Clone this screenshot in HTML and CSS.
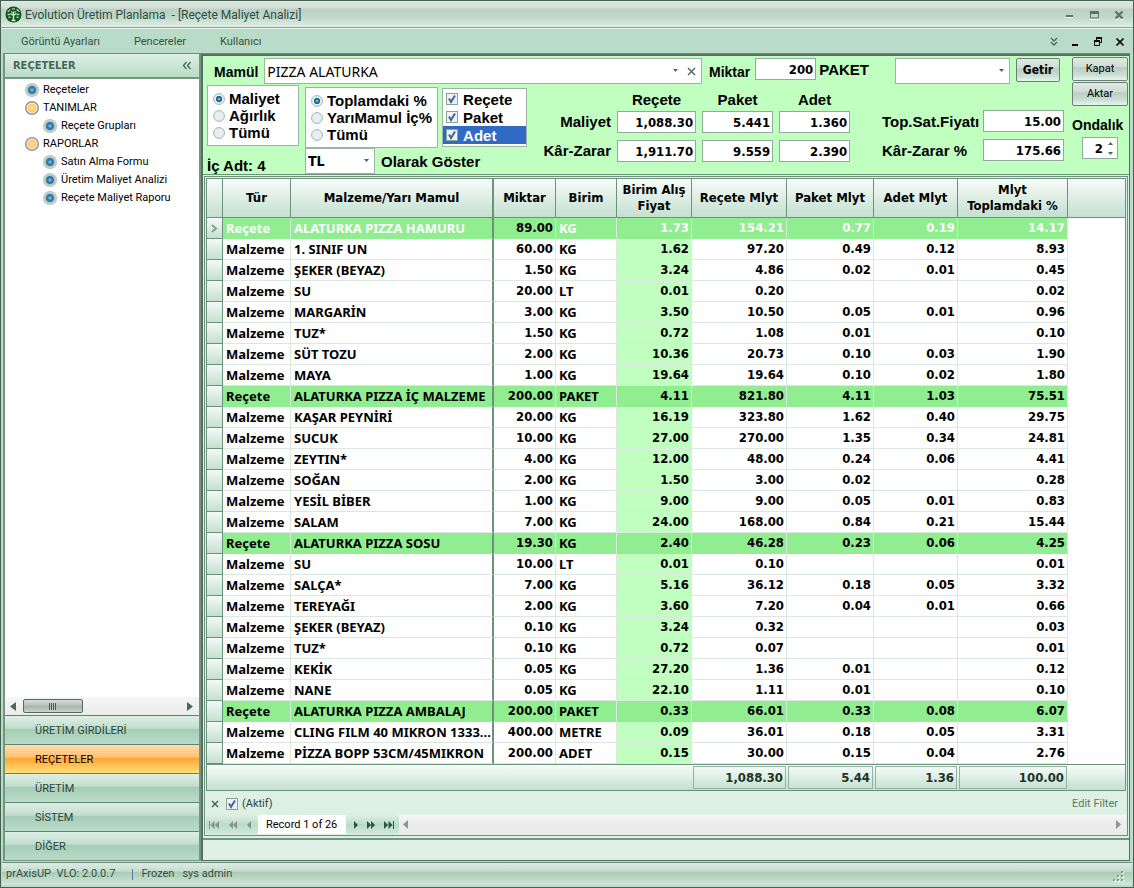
FILE: index.html
```html
<!DOCTYPE html>
<html lang="tr">
<head>
<meta charset="utf-8">
<title>Evolution Üretim Planlama</title>
<link rel="stylesheet" href="styles.css">
</head>
<body>
<div class="window">
  <header class="titlebar">
    <svg class="logo" width="17" height="17" viewBox="0 0 17 17" aria-hidden="true">
      <circle cx="8.500" cy="8.500" r="8" fill="#145220"/>
      <path d="M3 6q1-2 2.500-2.500M7 2.800h3M11.500 3.500Q13.500 4 14 6M2.500 8.500h3M11.500 8.500h3M6 5.500l1.500 1M11 5.500l-1.500 1M3.500 11l2 .5M13.500 11l-2 .5" fill="none" stroke="#a4d8a0" stroke-width="1.300"/>
      <path d="M8.500 5.500v9M8.500 9.500L5.500 7.500M8.500 9.500l3-2M6.500 14.500h4" fill="none" stroke="#c8ecc4" stroke-width="1.500"/>
    </svg>
    <h1 class="title">Evolution Üretim Planlama&nbsp; - [Reçete Maliyet Analizi]</h1>
    <div class="window-buttons">
      <button aria-label="Küçült"><svg width="14" height="14" viewBox="0 0 14 14"><path d="M3 8h7" stroke="#5f7068" stroke-width="2"/><path d="M3 9.500h7" stroke="#fff"/></svg></button>
      <button aria-label="Büyüt"><svg width="14" height="14" viewBox="0 0 14 14"><path d="M2.500 4v6h8V4" fill="none" stroke="#5f7068"/><path d="M2 4.500h9" stroke="#5f7068" stroke-width="3"/><path d="M2 11.500h9" stroke="#fff"/></svg></button>
      <button aria-label="Kapat"><svg width="14" height="14" viewBox="0 0 14 14"><path d="M2.500 3.500l7 7M9.500 3.500l-7 7" stroke="#5f7068" stroke-width="2.200"/><path d="M2 11.500h3M7 11.500h3" stroke="#fff"/></svg></button>
    </div>
  </header>
  <nav class="menubar">
    <a href="#">Görüntü Ayarları</a><a href="#">Pencereler</a><a href="#">Kullanıcı</a>
    <div class="child-buttons">
      <button aria-label="Diğer"><svg width="10" height="10" viewBox="0 0 10 10"><path d="M2 1l3 3 3-3M2 5l3 3 3-3" fill="none" stroke="#486b58" stroke-width="1.300"/></svg></button>
      <button aria-label="Simge"><svg width="10" height="10" viewBox="0 0 10 10"><path d="M1 8h6" stroke="#000" stroke-width="2"/></svg></button>
      <button aria-label="Geri yükle"><svg width="10" height="10" viewBox="0 0 10 10"><path d="M3.500 3V1.500h5v4H7M1.500 8.500v-4h5v4z" fill="none" stroke="#000"/><path d="M1 4h6M3 1h6" stroke="#000" stroke-width="2"/></svg></button>
      <button aria-label="Pencereyi kapat"><svg width="10" height="10" viewBox="0 0 10 10"><path d="M1.500 1.500l7 7M8.500 1.500l-7 7" stroke="#000" stroke-width="1.700"/></svg></button>
    </div>
  </nav>
  <div class="workspace">
    <aside class="sidebar">
      <div class="sidebar-head"><h2>REÇETELER</h2><button aria-label="Daralt"><svg width="10" height="9" viewBox="0 0 10 9"><path d="M4.500 1L1.500 4.500l3 3.500M8.500 1l-3 3.500 3 3.500" fill="none" stroke="#486b58" stroke-width="1.300"/></svg></button></div>
      <ul class="tree">
        <li><a href="#"><i class="dot"></i>Reçeteler</a></li>
        <li><a href="#"><i class="dot dot-orange"></i>TANIMLAR</a></li>
        <li class="child"><a href="#"><i class="dot"></i>Reçete Grupları</a></li>
        <li><a href="#"><i class="dot dot-orange"></i>RAPORLAR</a></li>
        <li class="child"><a href="#"><i class="dot"></i>Satın Alma Formu</a></li>
        <li class="child"><a href="#"><i class="dot"></i>Üretim Maliyet Analizi</a></li>
        <li class="child"><a href="#"><i class="dot"></i>Reçete Maliyet Raporu</a></li>
      </ul>
      <div class="scrollbar">
        <button aria-label="Sola"><svg width="6" height="9" viewBox="0 0 6 9"><path d="M6 0v9L0 4.500z" fill="#486b58"/></svg></button>
        <span class="thumb"><svg width="8" height="7" viewBox="0 0 8 7"><path d="M.5 0v7M2.500 0v7M4.500 0v7M6.500 0v7" stroke="#4c5c54"/></svg></span>
        <span class="grow"></span>
        <button aria-label="Sağa"><svg width="6" height="9" viewBox="0 0 6 9"><path d="M0 0v9l6-4.500z" fill="#486b58"/></svg></button>
      </div>
      <div class="groups">
        <button>ÜRETİM GİRDİLERİ</button>
        <button class="active">REÇETELER</button>
        <button>ÜRETİM</button>
        <button>SİSTEM</button>
        <button>DİĞER</button>
      </div>
    </aside>
    <main class="main">
      <form class="params">
        <div class="params-left">
          <div class="row-top">
            <label class="product-label" for="product">Mamül</label>
            <div class="combo product">
              <input id="product" value="PIZZA ALATURKA">
              <button type="button" aria-label="Aç"><svg width="7" height="4" viewBox="0 0 7 4"><path d="M1 0h5L3.500 3z" fill="#486b58"/></svg></button>
              <button type="button" aria-label="Temizle"><svg width="9" height="9" viewBox="0 0 9 9"><path d="M1 1l7 7M8 1L1 8" stroke="#486b58" stroke-width="1.400"/></svg></button>
            </div>
            <label class="amount-label" for="amount">Miktar</label>
            <input class="num amount" id="amount" value="200">
            <span class="unit">PAKET</span>
            <select class="variant" aria-label="Seçim"><option></option></select>
            <button type="button" class="push get">Getir</button>
          </div>
          <div class="row-body">
            <div class="stack basis">
              <fieldset class="box">
                <label><input type="radio" name="basis" checked>Maliyet</label>
                <label><input type="radio" name="basis">Ağırlık</label>
                <label><input type="radio" name="basis">Tümü</label>
              </fieldset>
              <p class="inner-count">İç Adt: 4</p>
            </div>
            <div class="stack options">
              <div class="option-row">
                <fieldset class="box ratio">
                  <label><input type="radio" name="ratio" checked>Toplamdaki %</label>
                  <label><input type="radio" name="ratio">YarıMamul İç%</label>
                  <label><input type="radio" name="ratio">Tümü</label>
                </fieldset>
                <fieldset class="box checks">
                  <label><input type="checkbox" checked>Reçete</label>
                  <label><input type="checkbox" checked>Paket</label>
                  <label class="selected"><input type="checkbox" checked>Adet</label>
                </fieldset>
              </div>
              <div class="currency-row">
                <select id="currency" class="currency"><option>TL</option></select>
                <label for="currency">Olarak Göster</label>
              </div>
            </div>
            <div class="summary">
              <span></span><span class="col">Reçete</span><span class="col">Paket</span><span class="col">Adet</span>
              <span>Maliyet</span>
              <input class="num" aria-label="Maliyet Reçete" value="1,088.30"><input class="num" aria-label="Maliyet Paket" value="5.441"><input class="num" aria-label="Maliyet Adet" value="1.360">
              <span>Kâr-Zarar</span>
              <input class="num" aria-label="Kâr-Zarar Reçete" value="1,911.70"><input class="num" aria-label="Kâr-Zarar Paket" value="9.559"><input class="num" aria-label="Kâr-Zarar Adet" value="2.390">
            </div>
            <div class="totals">
              <label for="price">Top.Sat.Fiyatı</label><input class="num" id="price" value="15.00">
              <label for="profit">Kâr-Zarar %</label><input class="num" id="profit" value="175.66">
            </div>
          </div>
        </div>
        <div class="params-right">
          <button type="button" class="push">Kapat</button>
          <button type="button" class="push">Aktar</button>
          <label for="decimals">Ondalık</label>
          <div class="spin">
            <input id="decimals" value="2">
            <svg width="5" height="13" viewBox="0 0 5 13" aria-hidden="true"><path d="M0 3h5L2.500 0zM0 10h5L2.500 13z" fill="#486b58"/></svg>
          </div>
        </div>
      </form>
      <section class="grid">
        <table>
          <colgroup><col class="c-ind"><col class="c-type"><col class="c-name"><col class="c-qty"><col class="c-unit"><col class="c-price"><col class="c-recipe"><col class="c-pack"><col class="c-piece"><col class="c-share"><col></colgroup>
          <thead><tr><th></th><th>Tür</th><th class="fixed">Malzeme/Yarı Mamul</th><th>Miktar</th><th>Birim</th><th>Birim Alış Fiyat</th><th>Reçete Mlyt</th><th>Paket Mlyt</th><th>Adet Mlyt</th><th>Mlyt Toplamdaki %</th><th></th></tr></thead>
          <tbody id="rows"></tbody>
          <tfoot><tr><td colspan="6"></td><td><output>1,088.30</output></td><td><output>5.44</output></td><td><output>1.36</output></td><td><output>100.00</output></td><td></td></tr></tfoot>
        </table>
        <div class="filter">
          <button aria-label="Filtreyi kapat"><svg width="8" height="8" viewBox="0 0 8 8"><path d="M1 1l6 6M7 1L1 7" stroke="#3c5c4a" stroke-width="1.300"/></svg></button>
          <label><input type="checkbox" checked>(Aktif)</label>
          <a href="#">Edit Filter</a>
        </div>
        <div class="navigator">
          <div class="nav-buttons muted">
            <button aria-label="İlk"><svg width="10" height="8" viewBox="0 0 10 8"><path d="M0 0h1v8H0zM5.500 0v8L1.500 4zM10 0v8L6 4z"/></svg></button>
            <button aria-label="Önceki sayfa"><svg width="8" height="8" viewBox="0 0 8 8"><path d="M4 0v8L0 4zM8 0v8L4 4z"/></svg></button>
            <button aria-label="Önceki"><svg width="4" height="8" viewBox="0 0 4 8"><path d="M4 0v8L0 4z"/></svg></button>
          </div>
          <span class="record">Record 1 of 26</span>
          <div class="nav-buttons">
            <button aria-label="Sonraki"><svg width="4" height="8" viewBox="0 0 4 8"><path d="M0 0v8l4-4z"/></svg></button>
            <button aria-label="Sonraki sayfa"><svg width="8" height="8" viewBox="0 0 8 8"><path d="M0 0v8l4-4zM4 0v8l4-4z"/></svg></button>
            <button aria-label="Son"><svg width="10" height="8" viewBox="0 0 10 8"><path d="M0 0v8l4-4zM4.500 0v8l4-4zM9 0h1v8H9z"/></svg></button>
          </div>
          <div class="hscroll">
            <svg width="5" height="9" viewBox="0 0 5 9"><path d="M5 0v9L0 4.500z" fill="#8a9a92"/></svg>
            <svg width="5" height="9" viewBox="0 0 5 9"><path d="M0 0v9l5-4.500z" fill="#8a9a92"/></svg>
          </div>
        </div>
      </section>
      <div class="tray"></div>
    </main>
  </div>
  <footer class="statusbar">
    <span>prAxisUP&nbsp; VLO: 2.0.0.7</span><i class="sep"></i><span>Frozen</span><span>sys admin</span>
    <svg class="grip" width="12" height="12" viewBox="0 0 12 12" aria-hidden="true"><path d="M9 1h2v2H9zM9 5h2v2H9zM5 5h2v2H5zM9 9h2v2H9zM5 9h2v2H5zM1 9h2v2H1z" fill="#fff"/><path d="M8 0h2v2H8zM8 4h2v2H8zM4 4h2v2H4zM8 8h2v2H8zM4 8h2v2H4zM0 8h2v2H0z" fill="#7fa08e"/></svg>
  </footer>
</div>
<script src="app.js"></script>
</body>
</html>
```
FILE: app.js
```js
const data = `Reçete|ALATURKA PIZZA HAMURU|89.00|KG|1.73|154.21|0.77|0.19|14.17
Malzeme|1. SINIF UN|60.00|KG|1.62|97.20|0.49|0.12|8.93
Malzeme|ŞEKER (BEYAZ)|1.50|KG|3.24|4.86|0.02|0.01|0.45
Malzeme|SU|20.00|LT|0.01|0.20|||0.02
Malzeme|MARGARİN|3.00|KG|3.50|10.50|0.05|0.01|0.96
Malzeme|TUZ*|1.50|KG|0.72|1.08|0.01||0.10
Malzeme|SÜT TOZU|2.00|KG|10.36|20.73|0.10|0.03|1.90
Malzeme|MAYA|1.00|KG|19.64|19.64|0.10|0.02|1.80
Reçete|ALATURKA PIZZA İÇ MALZEME|200.00|PAKET|4.11|821.80|4.11|1.03|75.51
Malzeme|KAŞAR PEYNİRİ|20.00|KG|16.19|323.80|1.62|0.40|29.75
Malzeme|SUCUK|10.00|KG|27.00|270.00|1.35|0.34|24.81
Malzeme|ZEYTIN*|4.00|KG|12.00|48.00|0.24|0.06|4.41
Malzeme|SOĞAN|2.00|KG|1.50|3.00|0.02||0.28
Malzeme|YESİL BİBER|1.00|KG|9.00|9.00|0.05|0.01|0.83
Malzeme|SALAM|7.00|KG|24.00|168.00|0.84|0.21|15.44
Reçete|ALATURKA PIZZA SOSU|19.30|KG|2.40|46.28|0.23|0.06|4.25
Malzeme|SU|10.00|LT|0.01|0.10|||0.01
Malzeme|SALÇA*|7.00|KG|5.16|36.12|0.18|0.05|3.32
Malzeme|TEREYAĞI|2.00|KG|3.60|7.20|0.04|0.01|0.66
Malzeme|ŞEKER (BEYAZ)|0.10|KG|3.24|0.32|||0.03
Malzeme|TUZ*|0.10|KG|0.72|0.07|||0.01
Malzeme|KEKİK|0.05|KG|27.20|1.36|0.01||0.12
Malzeme|NANE|0.05|KG|22.10|1.11|0.01||0.10
Reçete|ALATURKA PIZZA AMBALAJ|200.00|PAKET|0.33|66.01|0.33|0.08|6.07
Malzeme|CLING FILM 40 MIKRON 1333...|400.00|METRE|0.09|36.01|0.18|0.05|3.31
Malzeme|PİZZA BOPP 53CM/45MIKRON|200.00|ADET|0.15|30.00|0.15|0.04|2.76`;

const classes = ["text", "text fixed", "n qty", "text", "n price", "n", "n", "n", "n"];
const arrow = '<svg width="7" height="9" viewBox="0 0 7 9"><path d="M1 1l4 3.500L1 8" fill="none" stroke="#7fa48e" stroke-width="2"/></svg>';

document.getElementById("rows").innerHTML = data.split("\n").map((line, i) => {
  const cells = line.split("|");
  const kind = (cells[0] === "Reçete" ? "recipe" : "") + (i === 0 ? " focused" : "");
  return `<tr class="${kind}"><td class="ind">${i === 0 ? arrow : ""}</td>` +
    cells.map((c, j) => `<td class="${classes[j]}">${c}</td>`).join("") +
    '<td class="rest"></td></tr>';
}).join("");
```
FILE: styles.css
```css
* { box-sizing: border-box; }
body, h1, h2, ul, p, fieldset { margin: 0; padding: 0; }
body { font: 11px/14px Roboto, sans-serif; color: #000; }
button, input, select { font: inherit; color: inherit; margin: 0; }
button { border: 0; background: none; padding: 0; }
a { color: inherit; text-decoration: none; }
svg { display: block; }

.window { min-height: 100vh; display: flex; flex-direction: column; border: 1px solid #45614f; background: #b9dcc8; }
.titlebar { display: flex; align-items: center; gap: 3px; height: 27px; padding: 1px 6px 0 4px; border-bottom: 1px solid #84a893; background: linear-gradient(#e0e8e3, #cfdfd6 28%, #b9d1c4 30%, #bdd8c9 60%, #dfeee5); }
.title { font-size: 12px; font-weight: 400; color: #34483e; }
.window-buttons { display: flex; gap: 11px; margin-left: auto; }
.menubar { display: flex; align-items: center; height: 25px; padding: 2px 8px 0 20px; gap: 34px; border-top: 1px solid #e4f2ea; color: #34503f; }
.child-buttons { display: flex; gap: 12px; margin-left: auto; }

.workspace { flex: 1; display: flex; margin: 0 3px 0 2px; border-top: 1px solid #6c8f7b; }
.sidebar { width: 198px; flex: none; display: flex; flex-direction: column; border: solid #74967f; border-width: 0 2px 1px; background: #fff; }
.sidebar-head { display: flex; align-items: center; justify-content: space-between; height: 25px; padding: 0 7px 0 8px; background: linear-gradient(#deefe4, #b9dcc8); border-bottom: 2px solid #74967f; }
.sidebar-head h2 { font: bold 11px/16px "DejaVu Sans Condensed", sans-serif; color: #476856; }
.tree { flex: 1; list-style: none; padding: 2px 0 0 20px; }
.tree a { display: flex; align-items: center; gap: 4px; height: 18px; }
.tree .child { padding-left: 18px; }
.dot { width: 14px; height: 14px; border-radius: 50%; background: radial-gradient(circle closest-side, #a9d8f0 0, #3a8dbf 25%, #246a9b 48%, #a9c0b6 64%, #c6d6cd 80%, #aabdb3 100%); }
.dot-orange { background: radial-gradient(circle closest-side, #ffe2a0 0, #ffc566 55%, #fff3dc 70%, #a5a5a5 82%, #8a8a8a 100%); }
.scrollbar { display: flex; align-items: center; height: 18px; padding: 0 6px 0 5px; gap: 7px; background: linear-gradient(#f6f6f6, #ebebeb); }
.thumb { width: 60px; height: 14px; display: flex; align-items: center; justify-content: center; border: 1px solid #58685f; border-radius: 2px; background: linear-gradient(#d8dfdb, #b2bfb8 48%, #a2b2aa 50%, #c9d6cf); }
.grow { flex: 1; }
.groups { display: flex; flex-direction: column; }
.groups button { height: 29px; padding: 2px 0 0 30px; text-align: left; color: #28483a; border-top: 1px solid #608370; background: linear-gradient(#def0e6, #c1ddcd 44%, #a6cdb6 48%, #b9dcc8); }
.groups .active { color: #000; background: linear-gradient(#ffdcae, #ffc173 44%, #ffa633 48%, #ffdf78); }

.main { flex: 1; min-width: 0; display: flex; flex-direction: column; border: solid #5a6f63; border-width: 2px 1px 1px 2px; background: #deefe4; }
.params { display: flex; gap: 8px; height: 119px; background: #c0ffc0; border-bottom: 1px solid #6c917c; padding: 0 1px 0 4px; font: bold 15px/17px "Liberation Sans", Arial, sans-serif; }
.params-left { flex: 1; display: flex; flex-direction: column; }
.row-top { display: flex; height: 29px; padding: 2px 4px 0 0; align-items: flex-start; }
.product-label, .amount-label { font-size: 14px; padding: 6px 6px 0 7px; }
.amount-label { padding-right: 5px; }
.combo { display: flex; align-items: center; gap: 8px; height: 26px; border: 1px solid #9cb3a6; background: #fff; padding-right: 5px; }
.product { flex: 1; }
.combo input { flex: 1; min-width: 0; height: 22px; border: 0; padding: 0 2px; font: 14px/18px "Noto Sans", sans-serif; background: #fff; }
.num { height: 22px; min-width: 0; width: 100%; padding: 0 2px; text-align: right; border: 1px solid #8fab9b; background: #fff; font: bold 13px/16px "DejaVu Sans Condensed", sans-serif; }
.row-top .amount { width: 61px; }
.unit { padding: 3px 26px 0 3px; }
select { appearance: none; height: 26px; border: 1px solid #9cb3a6; border-radius: 0; padding: 0 2px; background: #fff url("data:image/svg+xml,%3Csvg xmlns='http://www.w3.org/2000/svg' width='7' height='4'%3E%3Cpath d='M1 0h5L3.500 3z' fill='%23486b58'/%3E%3C/svg%3E") no-repeat right 4px center; }
.variant { width: 115px; margin-right: 6px; }
.push { height: 24px; border: 1px solid #6c7f75; border-radius: 2px; background: linear-gradient(#dfe9e3, #cfdcd5 40%, #b9cdc2 44%, #c9ddd2 75%, #e6f4ec); font: 11px/14px Roboto, sans-serif; }
.get { width: 44px; font: bold 12px/16px "DejaVu Sans Condensed", sans-serif; }
.row-body { display: flex; align-items: flex-start; }
.stack { display: flex; flex-direction: column; }
.basis { width: 92px; margin-right: 6px; }
.box { border: 1px solid #9cb3a6; background: #fff; padding: 4px 5px; }
.box label { display: flex; align-items: center; height: 17px; gap: 4px; white-space: nowrap; }
.basis .box { height: 61px; }
.inner-count { padding-top: 11px; }
.options { padding-top: 2px; }
.option-row { display: flex; gap: 4px; }
.ratio { width: 131px; height: 61px; }
.box.checks { width: 85px; height: 59px; margin-top: 1px; padding: 1px 0; }
.box.checks label { height: 18px; padding-left: 3px; gap: 5px; }
.box.checks .selected { background: #316ac5; color: #fff; }
input[type="radio"], input[type="checkbox"] { appearance: none; flex: none; width: 12px; height: 12px; border: 1px solid #a9bdb1; background: #e8eef4; }
input[type="radio"] { border-radius: 50%; box-shadow: inset 0 0 0 1px #dce8e0; }
input[type="radio"]:checked { background: radial-gradient(circle, #bfe4f5 0, #2677a8 22%, #1f5f8c 40%, #e8eef4 48%); }
input[type="checkbox"] { border-color: #87a393; background: #eef2f7 url("data:image/svg+xml,%3Csvg xmlns='http://www.w3.org/2000/svg' viewBox='0 0 10 10'%3E%3Cpath d='M2 4.500l2 3.500 4-6.500' fill='none' stroke='%233f6797' stroke-width='2'/%3E%3C/svg%3E") center / 10px 10px no-repeat; }
.currency-row { display: flex; align-items: center; gap: 6px; }
.currency { width: 70px; font: bold 14px/16px "DejaVu Sans Condensed", sans-serif; }
.summary { display: grid; grid-template-columns: 68px 79px 71px 71px; grid-template-rows: 26px 29px 22px; column-gap: 6px; align-items: start; margin-left: 16px; text-align: right; line-height: 22px; white-space: nowrap; }
.summary .col { align-self: end; text-align: center; }
.totals { display: grid; grid-template-columns: 98px 81px; column-gap: 3px; row-gap: 7px; align-items: center; margin-left: auto; padding-top: 25px; white-space: nowrap; }
.params-right { width: 56px; display: flex; flex-direction: column; gap: 1px; padding-top: 1px; }
.params-right label { font-size: 14px; padding: 10px 0 2px; }
.spin { display: flex; align-items: center; width: 36px; height: 22px; margin-left: 10px; border: 1px solid #8fab9b; background: #fff; padding-right: 4px; }
.spin input { flex: 1; min-width: 0; height: 20px; border: 0; padding: 0 5px 0 0; text-align: right; background: #fff; font: bold 13px/16px "DejaVu Sans Condensed", sans-serif; }

.grid { flex: 1; display: flex; flex-direction: column; margin: 1px 1px 2px; border: 1px solid #6c917c; padding: 1px; }
table { width: 100%; border-spacing: 0; table-layout: fixed; background: #fff; font: bold 13px/16px "DejaVu Sans Condensed", sans-serif; border: solid #6c917c; border-width: 1px 1px 0; }
.c-ind { width: 16px; } .c-type { width: 68px; } .c-name { width: 203px; } .c-qty { width: 62px; } .c-unit { width: 61px; }
.c-price { width: 75px; } .c-recipe { width: 95px; } .c-pack { width: 87px; } .c-piece { width: 84px; } .c-share { width: 110px; }
th { height: 39px; padding: 0 2px; border: solid #6c917c; border-width: 0 1px 1px 0; background: linear-gradient(#f7fcf9, #c4e0d0); }
th:last-child { border-right: 0; }
td { height: 21px; padding: 0 2px 0 3px; border: solid #dbe8e0; border-width: 0 1px 1px 0; white-space: nowrap; overflow: hidden; }
.text { font-family: "Noto Sans", sans-serif; padding-right: 0; }
.n { text-align: right; }
.fixed { border-right: 2px solid #6c917c; }
.ind { padding: 0 0 0 4px; border-color: #6c917c; background: linear-gradient(#f3faf6, #c4e0d0); }
.price { background: #c0ffc0; border-right-color: #c0ffc0; }
.recipe td:not(.ind):not(.rest) { background: #90ee90; border-bottom-color: #90ee90; }
.focused td { color: #fff; }
.focused .qty { color: #000; }
.rest { border: 0; }
tfoot td { height: 27px; padding: 1px; border: solid #6c917c; border-width: 1px 0; background: linear-gradient(#f7fcf9, #c4e0d0); }
output { display: flex; align-items: center; justify-content: flex-end; height: 23px; padding: 0 2px; border: 1px solid #8fb3a0; color: #1c3528; }
.filter { display: flex; align-items: center; gap: 7px; height: 24px; padding: 1px 8px 0 5px; color: #28483a; }
.filter label { display: flex; align-items: center; gap: 4px; }
.filter a { margin-left: auto; color: #5d7a6a; }
.navigator { display: flex; height: 19px; }
.nav-buttons { display: flex; align-items: center; gap: 9px; padding: 0 5px 0 8px; fill: #28573e; background: linear-gradient(#deefe4, #b9dcc8 50%, #d2e8db); }
.muted { gap: 10px; padding: 0 7px 0 3px; fill: #85938b; }
.record { padding: 3px 9px 0 8px; background: #fff; white-space: nowrap; }
.hscroll { flex: 1; display: flex; align-items: center; justify-content: space-between; padding: 0 5px 0 4px; background: linear-gradient(#f7f7f7, #ececec 40%); }
.tray { height: 22px; border-top: 2px solid #74967f; }

.statusbar { display: flex; align-items: center; gap: 8px; height: 23px; margin: 1px 1px 2px; padding: 0 7px 0 4px; border-top: 1px solid #6c8f7b; background: linear-gradient(#dcece3, #c5dccf 38%, #a8cbb6 42%, #d2e6da); color: #33503f; }
.sep { width: 1px; height: 11px; margin: 0 0 0 9px; background: #4e7fa0; }
.grip { margin-left: auto; align-self: flex-end; margin-bottom: 2px; }
```
